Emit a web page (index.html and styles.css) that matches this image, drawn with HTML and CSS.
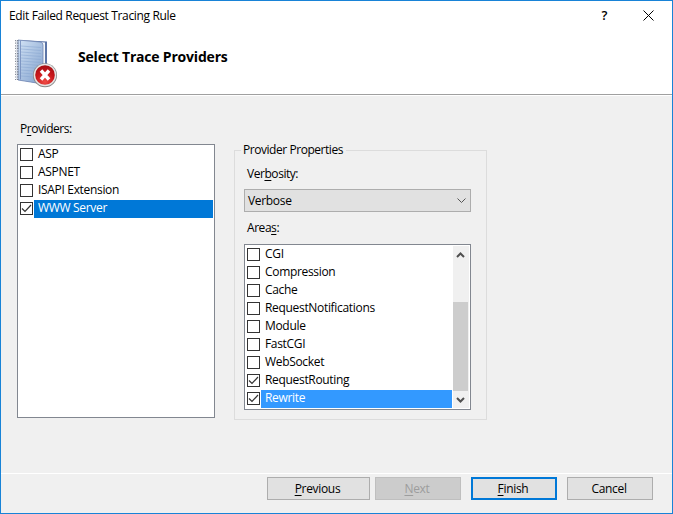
FILE: index.html
```html
<!DOCTYPE html>
<html lang="en">
<head>
    <meta charset="UTF-8">
    <meta name="viewport" content="width=device-width, initial-scale=1.0">
    <title>Edit Failed Request Tracing Rule</title>
    <link rel="stylesheet" href="styles.css">
</head>
<body>
    <div class="window">
        <div class="header">
            <div class="titlebar">
                <span class="title">Edit Failed Request Tracing Rule</span>
                <span class="help">?</span>
                <svg class="close" width="11" height="11" viewBox="0 0 11 11"><path d="M.5.5l10 10M10.5.5l-10 10" stroke="#000" fill="none"/></svg>
            </div>
            <div class="banner">
                <svg class="book" width="44" height="50" viewBox="0 0 44 50">
                    <defs>
                        <linearGradient id="cover" x1="0" y1="0" x2="1" y2="1">
                            <stop offset="0" stop-color="#d3e3f5"/>
                            <stop offset="1" stop-color="#7f9fcc"/>
                        </linearGradient>
                        <radialGradient id="red" cx=".5" cy=".85" r=".8">
                            <stop offset="0" stop-color="#ef4b45"/>
                            <stop offset=".6" stop-color="#c9171b"/>
                            <stop offset="1" stop-color="#a90f14"/>
                        </radialGradient>
                    </defs>
                    <path d="M5 2l28 1.500v39L29 46 5 42z" fill="#5b74a6"/>
                    <path d="M7 3l24 1.500v39l-3 .5z" fill="#f4f7fb"/>
                    <path d="M4 2l22 2q3 .3 3 3v39L4 42z" fill="url(#cover)" stroke="#7489b5" stroke-width=".8"/>
                    <path d="M7 8l20 1.500M7 11l20 1.500M7 14l20 1.500M7 17l20 1.500M7 20l20 1.500M7 23l20 1.500M7 26l20 1.500M7 29l20 1.500M7 32l20 1.500M7 35l20 1.500M7 38l20 1.500" stroke="#88a6d0" stroke-width=".8" opacity=".65"/>
                    <path d="M6.500 2.500v39" stroke="#6d87b8" stroke-width=".8"/>
                    <path d="M2.800 2v40" stroke="#7a8290" stroke-width="3.400" stroke-dasharray="1.200 1.400"/>
                    <path d="M2.500 2v40" stroke="#e0e4ea" stroke-width="1"/>
                    <circle cx="31" cy="37.300" r="12" fill="#858585"/>
                    <circle cx="31" cy="37" r="11.300" fill="#e4e4e4"/>
                    <circle cx="31" cy="37" r="9.800" fill="url(#red)"/>
                    <path d="M27 32.500l8 9M35 32.500l-8 9" stroke="#fff" stroke-width="3.400"/>
                </svg>
                <h1>Select Trace Providers</h1>
            </div>
        </div>
        <div class="content">
            <div class="providers">
                <div class="label">P<u>r</u>oviders:</div>
                <div class="listbox">
                    <div class="item"><i class="check"></i><span>ASP</span></div>
                    <div class="item"><i class="check"></i><span>ASPNET</span></div>
                    <div class="item"><i class="check"></i><span>ISAPI Extension</span></div>
                    <div class="item selected"><i class="check"><svg width="11" height="11" viewBox="0 0 11 11"><path d="M1 5.500l3 3 6-6.500"/></svg></i><span>WWW Server</span></div>
                </div>
            </div>
            <fieldset class="properties">
                <legend>Provider Properties</legend>
                <div class="label">Ver<u>b</u>osity:</div>
                <div class="combo">
                    <span>Verbose</span>
                    <svg width="9" height="5" viewBox="0 0 9 5"><path d="M.5.5l4 4 4-4" stroke="#555" fill="none"/></svg>
                </div>
                <div class="label">Area<u>s</u>:</div>
                <div class="listbox areas">
                    <div class="items">
                        <div class="item"><i class="check"></i><span>CGI</span></div>
                        <div class="item"><i class="check"></i><span>Compression</span></div>
                        <div class="item"><i class="check"></i><span>Cache</span></div>
                        <div class="item"><i class="check"></i><span>RequestNotifications</span></div>
                        <div class="item"><i class="check"></i><span>Module</span></div>
                        <div class="item"><i class="check"></i><span>FastCGI</span></div>
                        <div class="item"><i class="check"></i><span>WebSocket</span></div>
                        <div class="item"><i class="check"><svg width="11" height="11" viewBox="0 0 11 11"><path d="M1 5.500l3 3 6-6.500"/></svg></i><span>RequestRouting</span></div>
                        <div class="item selected"><i class="check"><svg width="11" height="11" viewBox="0 0 11 11"><path d="M1 5.500l3 3 6-6.500"/></svg></i><span>Rewrite</span></div>
                    </div>
                    <div class="scrollbar">
                        <svg width="15" height="17" viewBox="0 0 15 17"><path d="M4 11l3.500-3.500L11 11"/></svg>
                        <div class="thumb"></div>
                        <svg width="15" height="17" viewBox="0 0 15 17"><path d="M4 7l3.500 3.500L11 7"/></svg>
                    </div>
                </div>
            </fieldset>
        </div>
        <div class="footer">
            <button class="previous"><u>P</u>revious</button>
            <button class="next" disabled><u>N</u>ext</button>
            <button class="finish"><u>F</u>inish</button>
            <button class="cancel">Cancel</button>
        </div>
    </div>
</body>
</html>
```
FILE: styles.css
```css
* {
    box-sizing: border-box;
}
body {
    margin: 0;
    font-family: "Open Sans", "Noto Sans", sans-serif;
    font-size: 12px;
    line-height: 18px;
    letter-spacing: -0.32px;
    color: #000;
}
svg {
    display: block;
}
u {
    text-underline-offset: 2px;
    text-decoration-thickness: 1px;
    text-decoration-skip-ink: none;
}
.window {
    width: 673px;
    height: 514px;
    border: 1px solid #1883d7;
    background: #f0f0f0;
    display: flex;
    flex-direction: column;
}
.header {
    height: 95px;
    background: #fff;
    border-bottom: 1px solid #fff;
    box-shadow: inset 0 -1px #a0a0a0;
}
.titlebar {
    height: 30px;
    padding: 0 18px 0 8px;
    display: flex;
    align-items: center;
}
.title {
    flex: 1;
    letter-spacing: -0.35px;
}
.help {
    font-size: 13px;
    font-weight: 600;
    margin: -2px 36px 0 0;
}
.close {
    margin-top: -1px;
}
.banner {
    display: flex;
    padding: 7px 0 0 13px;
}
h1 {
    margin: 10px 0 0 20px;
    font-size: 14px;
    line-height: 18px;
    font-weight: bold;
    letter-spacing: -0.2px;
}
.content {
    height: 377px;
    padding: 24px 0 0 16px;
    display: flex;
    gap: 19px;
}
.providers {
    width: 198px;
}
.label {
    height: 18px;
    padding-left: 3px;
    letter-spacing: -0.45px;
}
.listbox {
    border: 1px solid #828790;
    background: #fff;
    padding: 1px;
}
.providers .listbox {
    height: 274px;
    margin-top: 6px;
}
.item {
    height: 18px;
    display: flex;
    padding-left: 1px;
}
.item span {
    flex: 1;
    height: 18px;
    line-height: 16px;
    padding-left: 4px;
    margin-left: 1px;
}
.check {
    width: 13px;
    height: 13px;
    margin-top: 2px;
    border: 1px solid #333;
    background: #fff;
}
.check path {
    stroke: #333;
    stroke-width: 1.2;
    fill: none;
}
.selected span {
    background: #0078d7;
    color: #fff;
}
.areas .selected span {
    background: #3399ff;
}
.properties {
    width: 253px;
    height: 279px;
    margin: 21px 0 0;
    padding: 6px 15px 0 9px;
    border: 1px solid #dcdcdc;
}
.properties legend {
    height: 18px;
    padding: 0 3px 0 2px;
    margin-left: -3px;
    letter-spacing: -0.45px;
}
.combo {
    height: 23px;
    margin: 6px 0 7px;
    padding: 0 4px 0 3px;
    border: 1px solid #adadad;
    background: #e1e1e1;
    display: flex;
    align-items: center;
    justify-content: space-between;
}
.areas {
    height: 166px;
    margin-top: 7px;
    display: flex;
}
.items {
    flex: 1;
    margin-right: 1px;
}
.scrollbar {
    width: 16px;
    background: #f0f0f0;
    display: flex;
    flex-direction: column;
    justify-content: space-between;
}
.scrollbar path {
    stroke: #505050;
    stroke-width: 2;
    fill: none;
}
.thumb {
    width: 15px;
    height: 89px;
    margin-top: auto;
    background: #cdcdcd;
}
.footer {
    flex: 1;
    padding: 3px 19px 0 0;
    border-top: 1px solid #fff;
    display: flex;
    justify-content: flex-end;
}
button {
    width: 86px;
    height: 23px;
    padding: 0 2px 0 0;
    border: 1px solid #adadad;
    background: #e1e1e1;
    color: #000;
    font: inherit;
    letter-spacing: inherit;
}
.previous {
    width: 103px;
    margin-right: 5px;
}
.next {
    margin-right: 10px;
    background: #cccccc;
    border-color: #bfbfbf;
    color: #9d9d9d;
}
.finish {
    margin-right: 10px;
    border: 2px solid #0078d7;
}
```
